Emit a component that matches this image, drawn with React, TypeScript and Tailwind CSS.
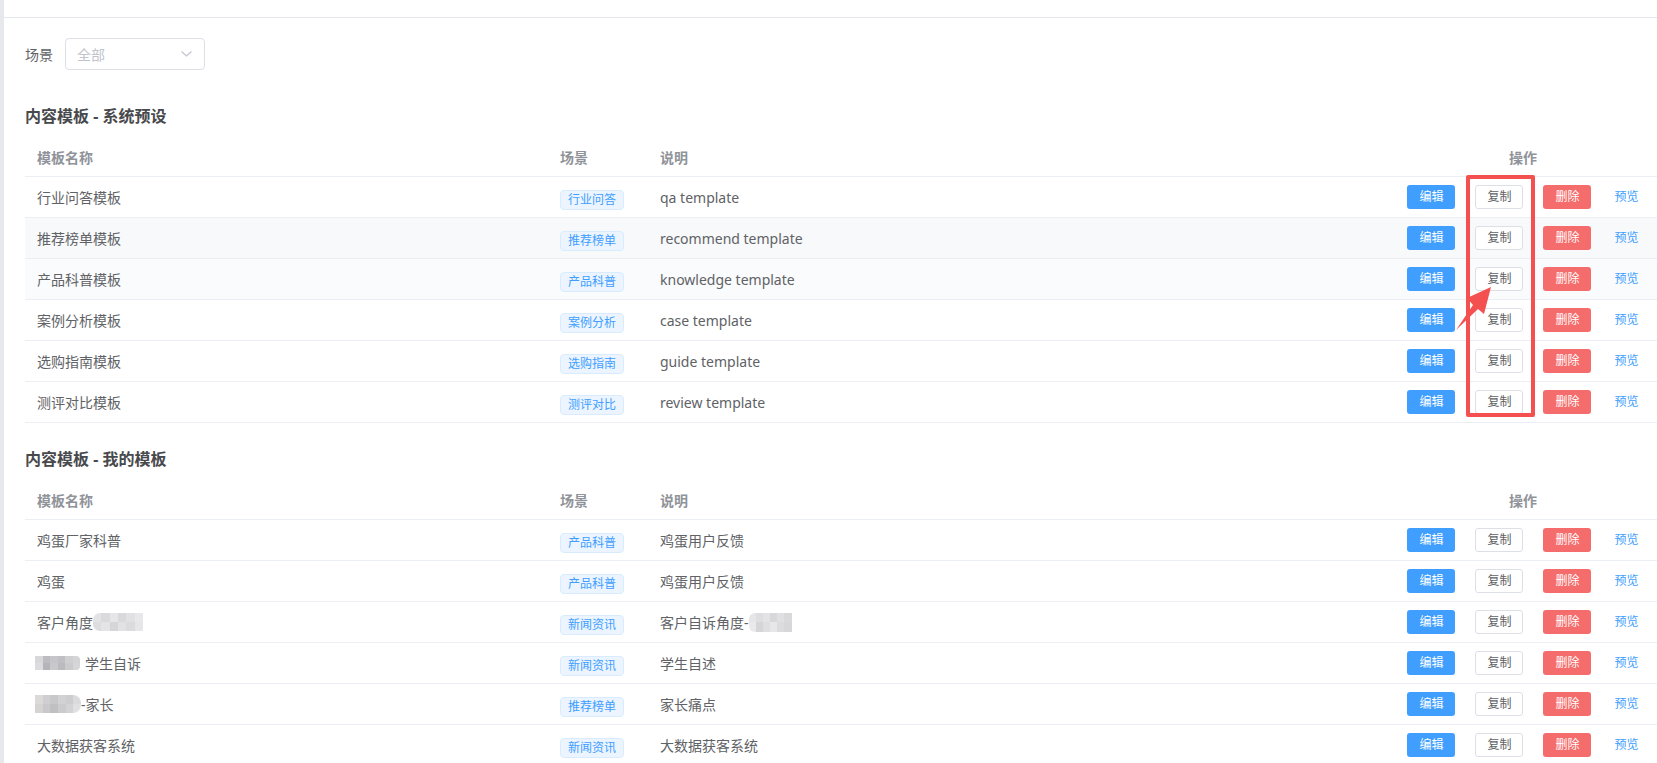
import React from "react";

type Row = {
  name: React.ReactNode;
  tag: string;
  desc: React.ReactNode;
  bg?: string;
};

const cols = "grid grid-cols-[525px_100px_739px_1fr]";

function Blur({ className, cells }: { className: string; cells: string[] }) {
  return (
    <span className={`inline-grid grid-cols-6 grid-rows-2 overflow-hidden ${className}`}>
      {cells.map((c, i) => (
        <span key={i} className={c} />
      ))}
    </span>
  );
}

const systemRows: Row[] = [
  { name: "行业问答模板", tag: "行业问答", desc: "qa template" },
  { name: "推荐榜单模板", tag: "推荐榜单", desc: "recommend template", bg: "bg-[#f8f9fb]" },
  { name: "产品科普模板", tag: "产品科普", desc: "knowledge template", bg: "bg-[#fafbfc]" },
  { name: "案例分析模板", tag: "案例分析", desc: "case template" },
  { name: "选购指南模板", tag: "选购指南", desc: "guide template" },
  { name: "测评对比模板", tag: "测评对比", desc: "review template" },
];

const myRows: Row[] = [
  { name: "鸡蛋厂家科普", tag: "产品科普", desc: "鸡蛋用户反馈" },
  { name: "鸡蛋", tag: "产品科普", desc: "鸡蛋用户反馈" },
  {
    name: (
      <>
        客户角度
        <Blur
          className="w-[50px] h-[18px] rounded-l-[7px]"
          cells={[
            "bg-[#e3e3e5]", "bg-[#dadadc]", "bg-[#e6e6e8]", "bg-[#d9d9dc]", "bg-[#e1e1e3]", "bg-[#e8e8ea]",
            "bg-[#dddddf]", "bg-[#e4e4e6]", "bg-[#d6d6d9]", "bg-[#e2e2e4]", "bg-[#dbdbde]", "bg-[#e6e6e8]",
          ]}
        />
      </>
    ),
    tag: "新闻资讯",
    desc: (
      <>
        客户自诉角度-
        <Blur
          className="w-[43px] h-[19px] rounded-l-[6px]"
          cells={[
            "bg-[#e6e6e8]", "bg-[#dedee0]", "bg-[#e3e3e5]", "bg-[#d8d8db]", "bg-[#e0e0e2]", "bg-[#d9d9dc]",
            "bg-[#e9e9eb]", "bg-[#d5d5d8]", "bg-[#dfdfe1]", "bg-[#e7e7e9]", "bg-[#dcdcde]", "bg-[#d7d7da]",
          ]}
        />
      </>
    ),
  },
  {
    name: (
      <>
        <Blur
          className="ml-[-2px] mr-[5px] w-[45px] h-[14px] rounded-r-[4px]"
          cells={[
            "bg-[#d8d8da]", "bg-[#bdbcc0]", "bg-[#c6c6ca]", "bg-[#c0c0c4]", "bg-[#cfcfd2]", "bg-[#d4d4d7]",
            "bg-[#dcdcde]", "bg-[#b5b4b8]", "bg-[#c9c9cc]", "bg-[#bbbbbf]", "bg-[#cbcbce]", "bg-[#d6d6d8]",
          ]}
        />
        学生自诉
      </>
    ),
    tag: "新闻资讯",
    desc: "学生自述",
  },
  {
    name: (
      <>
        <Blur
          className="ml-[-2px] w-[46px] h-[18px] rounded-r-[8px]"
          cells={[
            "bg-[#dcd9d9]", "bg-[#cfcfd2]", "bg-[#c8c8cb]", "bg-[#d2d2d5]", "bg-[#cdcdd0]", "bg-[#dadadd]",
            "bg-[#d6d3d3]", "bg-[#c9c9cc]", "bg-[#c0c0c3]", "bg-[#cbcbce]", "bg-[#d3d3d6]", "bg-[#e0e0e2]",
          ]}
        />
        -家长
      </>
    ),
    tag: "推荐榜单",
    desc: "家长痛点",
  },
  { name: "大数据获客系统", tag: "新闻资讯", desc: "大数据获客系统" },
];

function Actions() {
  return (
    <div className="flex items-center justify-center">
      <button className="w-[48px] h-[24px] rounded-[3px] bg-[#409eff] text-white text-[12px] leading-none">
        编辑
      </button>
      <button className="ml-[20px] w-[48px] h-[24px] rounded-[3px] border border-[#dcdfe6] bg-white text-[#606266] text-[12px] leading-none">
        复制
      </button>
      <button className="ml-[20px] w-[48px] h-[24px] rounded-[3px] bg-[#f56c6c] text-white text-[12px] leading-none">
        删除
      </button>
      <button className="ml-[23px] h-[24px] text-[#409eff] text-[12px] leading-none">预览</button>
    </div>
  );
}

function TemplateTable({ title, rows }: { title: string; rows: Row[] }) {
  return (
    <section>
      <h2 className="h-[24px] leading-[24px] text-[16px] font-bold text-[#48494c]">{title}</h2>
      <div className="mt-[8px]">
        <div
          className={`${cols} h-[41px] items-center border-b border-[#ebeef5] pt-[3px] text-[14px] font-bold text-[#909399]`}
        >
          <div className="pl-[12px]">模板名称</div>
          <div className="pl-[10px]">场景</div>
          <div className="pl-[10px]">说明</div>
          <div className="text-center">操作</div>
        </div>
        {rows.map((r, i) => (
          <div
            key={i}
            className={`${cols} h-[41px] items-center border-b border-[#ebeef5] ${r.bg ?? "bg-white"}`}
          >
            <div className="pl-[12px] flex items-center text-[14px] text-[#606266]">{r.name}</div>
            <div className="pl-[10px]">
              <span className="mt-[5px] inline-flex items-center justify-center w-[64px] h-[20px] rounded-[4px] border border-[#d9ecff] bg-[#ecf5ff] text-[12px] text-[#409eff]">
                {r.tag}
              </span>
            </div>
            <div className="pl-[10px] flex items-center text-[14px] text-[#606266]">{r.desc}</div>
            <Actions />
          </div>
        ))}
      </div>
    </section>
  );
}

export default function App() {
  return (
    <div className="relative flex min-h-screen w-full overflow-hidden bg-white font-['Noto_Sans','Noto_Sans_CJK_SC',sans-serif]">
      <div className="w-[4px] shrink-0 bg-[#e6e8eb]" />
      <div className="flex-1 min-w-0">
        <div className="h-[18px] border-b border-[#e4e7ed]" />
        <div className="pl-[21px] pt-[20px]">
          <div className="flex items-center h-[32px]">
            <span className="text-[14px] text-[#606266]">场景</span>
            <div className="ml-[12px] flex items-center justify-between w-[140px] h-[32px] rounded-[4px] border border-[#dcdfe6] pl-[11px] pr-[12px]">
              <span className="text-[14px] text-[#c0c4cc]">全部</span>
              <svg width="11" height="6" viewBox="0 0 11 6" fill="none">
                <path d="M0.5 0.5 L5.5 5 L10.5 0.5" stroke="#c0c4cc" strokeWidth="1.2" />
              </svg>
            </div>
          </div>
          <div className="mt-[34px]">
            <TemplateTable title="内容模板 - 系统预设" rows={systemRows} />
          </div>
          <div className="mt-[24px]">
            <TemplateTable title="内容模板 - 我的模板" rows={myRows} />
          </div>
        </div>
      </div>

      {/* screenshot annotation: red box + arrow */}
      <div className="absolute left-[1466px] top-[175px] w-[69px] h-[242px] border-[4px] border-[#f4504f] rounded-[2px]" />
      <svg className="absolute left-0 top-0 pointer-events-none" width="1657" height="763">
        <polygon
          points="1456,330 1473,305 1467,298 1491,287 1484,314 1478,309"
          fill="#f4504f"
        />
      </svg>
    </div>
  );
}
